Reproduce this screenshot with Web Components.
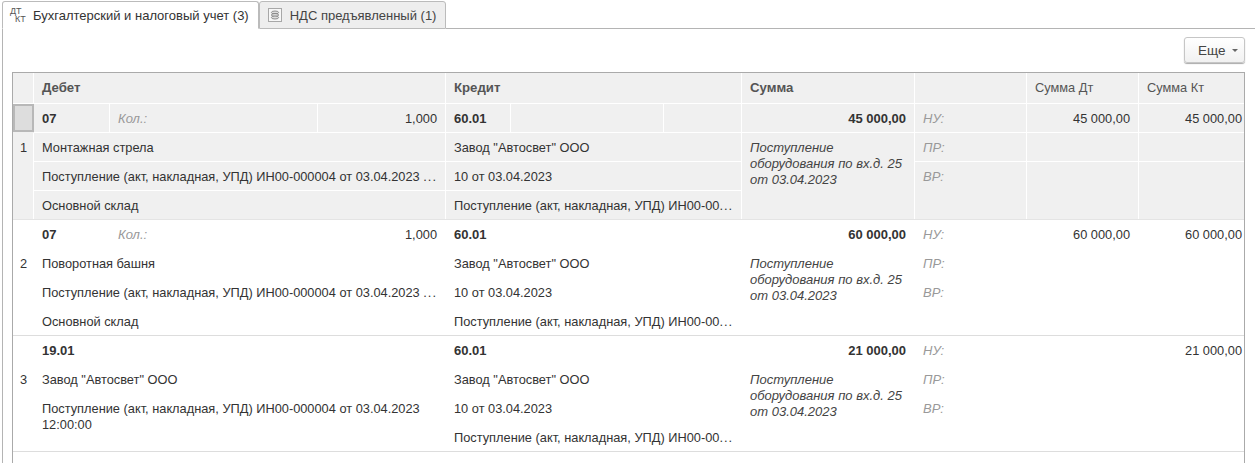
<!DOCTYPE html>
<html lang="ru">
<head>
<meta charset="utf-8">
<title>Проводки</title>
<style>
  html, body { margin: 0; height: 100%; background: #fff; overflow: hidden; }
  body { font: 12.8px "Liberation Sans", Arial, sans-serif; color: #333; }
</style>
</head>
<body>
<report-tabs>
  <tab-item slot="tabs" active>
    <span slot="icon" class="dtkt"></span>
    Бухгалтерский и налоговый учет (3)
  </tab-item>
  <tab-item slot="tabs">
    <svg slot="icon" width="14" height="14" viewBox="0 0 14 14">
      <rect x=".5" y=".5" width="13" height="13" fill="#f7f7f7" stroke="#a8a8a8"/>
      <ellipse cx="7" cy="4.5" rx="3.6" ry="1.5" fill="#ddd" stroke="#777" stroke-width=".8"/>
      <ellipse cx="7" cy="7" rx="3.6" ry="1.5" fill="#ddd" stroke="#777" stroke-width=".8"/>
      <ellipse cx="7" cy="9.5" rx="3.6" ry="1.5" fill="#ddd" stroke="#777" stroke-width=".8"/>
    </svg>
    НДС предъявленный (1)
  </tab-item>

  <tool-bar><more-button>Еще</more-button></tool-bar>

  <entry-grid id="grid">
    <entry-head slot="head"></entry-head>
  </entry-grid>
</report-tabs>

<script>
const COLS = "21px 412px 296px 173px 112px 112px 105px";

class ReportTabs extends HTMLElement {
  constructor() {
    super();
    this.attachShadow({ mode: "open" }).innerHTML = `
      <style>
        :host { display: flex; flex-direction: column; height: 463px; box-sizing: border-box; padding: 1px 0 0 2px; }
        .bar { display: flex; height: 28px; flex: none; }
        .bar::after { content: ""; flex: 1; border-bottom: 1px solid #b4b4b4; }
        .panel { flex: 1; border-left: 1px solid #b4b4b4; padding: 8px 10px 0 9px; display: flex; flex-direction: column; min-height: 0; }
      </style>
      <div class="bar"><slot name="tabs"></slot></div>
      <div class="panel"><slot></slot></div>`;
  }
}

class TabItem extends HTMLElement {
  constructor() {
    super();
    this.attachShadow({ mode: "open" }).innerHTML = `
      <style>
        :host { display: flex; align-items: center; box-sizing: border-box; white-space: nowrap;
          height: 28px; padding: 0 9px 0 8px; gap: 8px;
          background: #eee; color: #444; border: 1px solid #bbb; border-radius: 3px 3px 0 0;
          font-size: 13px; }
        :host([active]) { background: #fff; color: #333; border-bottom-color: #fff; padding: 0 9px 0 7px; gap: 6px; }
      </style>
      <slot name="icon"></slot><slot></slot>`;
  }
  connectedCallback() {
    const d = this.querySelector(".dtkt");
    if (d) {
      d.style.cssText = "display:block;font-size:9px;line-height:8px;width:17px;color:#555";
      d.innerHTML = '<span style="display:block">ДТ</span><span style="display:block;padding-left:5px">КТ</span>';
    }
  }
}

class ToolBar extends HTMLElement {
  constructor() {
    super();
    this.attachShadow({ mode: "open" }).innerHTML = `
      <style>:host { display: flex; justify-content: flex-end; height: 35px; flex: none; }</style>
      <slot></slot>`;
  }
}

class MoreButton extends HTMLElement {
  constructor() {
    super();
    this.attachShadow({ mode: "open" }).innerHTML = `
      <style>
        :host { display: flex; align-items: center; box-sizing: border-box; width: 61px; height: 26px; padding: 0 0 0 13px; gap: 7px;
          border: 1px solid #c6c6c6; border-radius: 3px; background: linear-gradient(#fff, #f1f1f1);
          box-shadow: 0 1px 1px #aaa; font-size: 13.5px; color: #444; }
        i { width: 0; height: 0; border: 3px solid transparent; border-top-color: #666; border-bottom: 0; margin-top: 1px; }
      </style>
      <slot></slot><i></i>`;
  }
}

class EntryGrid extends HTMLElement {
  constructor() {
    super();
    this.attachShadow({ mode: "open" }).innerHTML = `
      <style>
        :host { display: block; flex: 1; box-sizing: border-box; width: 1233px; border: 1px solid #aaa; border-bottom: 0; min-height: 0; }
      </style>
      <slot name="head"></slot><slot></slot>`;
  }
}

class EntryHead extends HTMLElement {
  constructor() {
    super();
    const titles = [["", 0], ["Дебет", 1], ["Кредит", 1], ["Сумма", 1], ["", 0], ["Сумма Дт", 0], ["Сумма Кт", 0]];
    this.attachShadow({ mode: "open" }).innerHTML = `
      <style>
        :host { display: grid; grid-template-columns: ${COLS}; height: 31px; box-sizing: border-box; border-bottom: 1px solid #fff; background: #f0f0f0; color: #555; font-size: 12.8px; }
        div { border-right: 1px solid #fff; padding: 0 8px; line-height: 29px; white-space: nowrap; }
        div:last-child { border-right: 0; }
        b { font-weight: bold; font-size: 13.2px; }
      </style>
      ${titles.map(([t, b]) => `<div>${b ? `<b>${t}</b>` : t}</div>`).join("")}`;
  }
}

// одна проводка: четыре строки по 29px
class EntryRow extends HTMLElement {
  constructor() {
    super();
    this.attachShadow({ mode: "open" }).innerHTML = `
      <style>
        :host { display: grid; grid-template-columns: ${COLS}; grid-template-rows: 29px 29px 29px 28px; --line: transparent;
          box-sizing: border-box; height: 116px; border-bottom: 1px solid #ddd; }
        :host([active]) { --line: #fff; background: #f0f0f0; border-bottom-color: #e4e4e4; }
      </style>
      <slot></slot>`;
  }
}

class EntryCell extends HTMLElement {
  constructor() {
    super();
    this.attachShadow({ mode: "open" }).innerHTML = `
      <style>
        :host { display: block; box-sizing: border-box; min-width: 0; padding: 1px 8px 0; line-height: 28px; overflow: hidden;
          white-space: nowrap; border-right: 1px solid var(--line); border-bottom: 1px solid var(--line); color: #333; }
        :host([right]) { text-align: right; }
        :host([bold]) { font-weight: bold; font-size: 13px; }
        :host([hint]) { font-style: italic; color: #999; font-size: 13px; }
        :host([note]) { font-style: italic; white-space: normal; line-height: 16px; padding-top: 7px; color: #444; border-bottom: 0; font-size: 13px; }
        :host([wrap]) { white-space: normal; line-height: 16px; padding-top: 7px; }
        :host([sel]) { background: #ddd; border: 2px solid #b8b8b8; margin-bottom: 1px; padding: 0; }
        :host([num]) { padding: 1px 0 0 7px; border-bottom: 0; }
        :host([flush]) { padding-right: 2px; }
        :host([last]) { border-right: 0; }
        :host([end]) { border-bottom: 0; }
      </style>
      <slot></slot>`;
  }
}

class SplitCell extends HTMLElement {
  constructor() {
    super();
    this.attachShadow({ mode: "open" }).innerHTML = `
      <style>:host { display: grid; min-width: 0; }</style><slot></slot>`;
  }
  connectedCallback() {
    this.style.gridTemplateColumns = this.getAttribute("cols");
  }
}

customElements.define("report-tabs", ReportTabs);
customElements.define("tab-item", TabItem);
customElements.define("tool-bar", ToolBar);
customElements.define("more-button", MoreButton);
customElements.define("entry-grid", EntryGrid);
customElements.define("entry-head", EntryHead);
customElements.define("entry-row", EntryRow);
customElements.define("entry-cell", EntryCell);
customElements.define("split-cell", SplitCell);

const DOC = "Поступление (акт, накладная, УПД) ИН00-000004 от 03.04.2023";
const NOTE = "Поступление оборудования по вх.д. 25 от 03.04.2023";
const DOTS = '<span style="letter-spacing:1px">...</span>';
const rows = [
  { n: 1, acc: "07", qty: "1,000", name: "Монтажная стрела", sum: "45 000,00", dt: "45 000,00", kt: "45 000,00", store: "Основной склад", active: true },
  { n: 2, acc: "07", qty: "1,000", name: "Поворотная башня", sum: "60 000,00", dt: "60 000,00", kt: "60 000,00", store: "Основной склад" },
  { n: 3, acc: "19.01", name: "Завод \"Автосвет\" ООО", sum: "21 000,00", dt: "", kt: "21 000,00" },
];

const cell = (text, attrs, col, row) =>
  `<entry-cell ${attrs} style="grid-column:${col};grid-row:${row}">${text}</entry-cell>`;

// счет дебета/кредита с субконто в верхней строке
function splitCell(parts, col) {
  return `<split-cell style="grid-column:${col};grid-row:1" cols="${parts.map((p) => p[1] + "px").join(" ")}">
    ${parts.map((p) => `<entry-cell ${p[2] || ""}>${p[0]}</entry-cell>`).join("")}
  </split-cell>`;
}

const grid = document.getElementById("grid");
for (const r of rows) {
  const debit = r.qty
    ? splitCell([[r.acc, 76, "bold"], ["Кол.:", 208, "hint"], [r.qty, 128, "right"]], 2)
    : cell(r.acc, "bold", 2, 1);
  const debitRest = r.qty
    ? cell(r.name, "", 2, 2) + cell(DOC + " " + DOTS, "", 2, 3) + cell(r.store, "end", 2, 4)
    : cell(r.name, "", 2, 2) + cell(DOC + " 12:00:00", "wrap end", 2, "3 / span 2");
  grid.insertAdjacentHTML("beforeend", `
    <entry-row ${r.active ? "active" : ""}>
      ${cell("", r.active ? "sel" : "", 1, 1)}
      ${cell(r.n, "num", 1, "2 / span 3")}
      ${debit}${debitRest}
      ${splitCell([["60.01", 65, "bold"], ["", 153], ["", 78]], 3)}
      ${cell("Завод \"Автосвет\" ООО", "", 3, 2)}
      ${cell("10 от 03.04.2023", "", 3, 3)}
      ${cell("Поступление (акт, накладная, УПД) ИН00-00" + DOTS, "end", 3, 4)}
      ${cell(r.sum, "bold right", 4, 1)}
      ${cell(NOTE, "note", 4, "2 / span 3")}
      ${cell("НУ:", "hint", 5, 1)}${cell("ПР:", "hint", 5, 2)}${cell("ВР:", "hint end", 5, "3 / span 2")}
      ${cell(r.dt, "right", 6, 1)}${cell("", "", 6, 2)}${cell("", "end", 6, "3 / span 2")}
      ${cell(r.kt, "right flush last", 7, 1)}${cell("", "last", 7, 2)}${cell("", "last end", 7, "3 / span 2")}
    </entry-row>`);
}
</script>
</body>
</html>
